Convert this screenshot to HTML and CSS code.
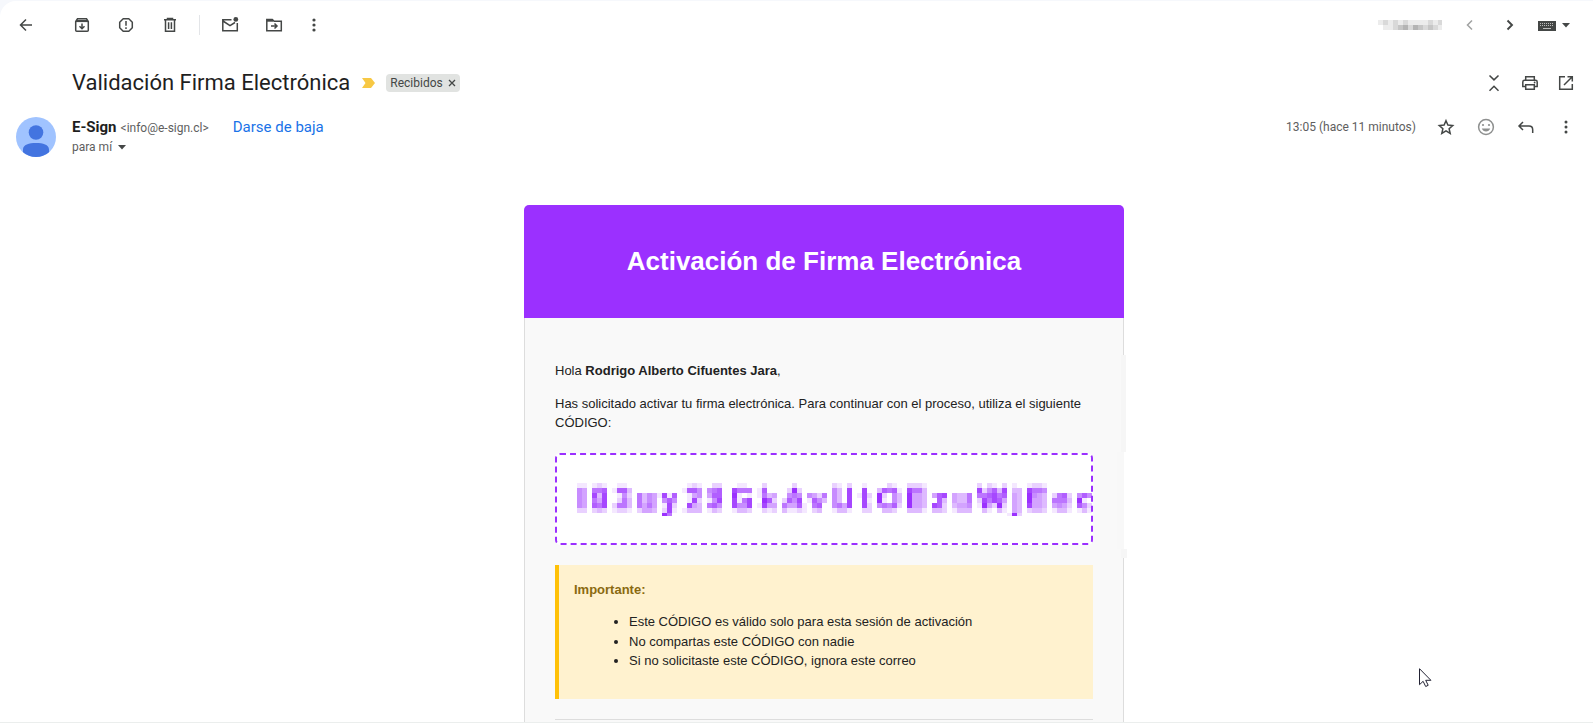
FILE: index.html
```html
<!DOCTYPE html>
<html lang="es">
<head>
<meta charset="utf-8">
<title>Validación Firma Electrónica</title>
<link rel="stylesheet" href="styles.css">
</head>
<body>
<main class="mail">
  <div class="toolbar">
    <button class="icon-btn back" aria-label="Atrás"><svg viewBox="0 0 20 20"><path d="M16 10H5M10 4.5 4.500 10l5.500 5.500"/></svg></button>
    <div class="tools">
      <button class="icon-btn" aria-label="Archivar"><svg viewBox="0 0 20 20"><path d="M3.700 6.500v8.800q0 1 1 1h10.600q1 0 1-1V6.500l-1.800-2.700h-9z"/><path d="M4 6h12" stroke-width="2.200"/><path d="M10 8.500v5M7.500 11.200l2.500 2.500 2.500-2.500"/></svg></button>
      <button class="icon-btn" aria-label="Marcar como spam"><svg viewBox="0 0 20 20"><path d="M7.200 3.700h5.600l3.500 3.500v5.600l-3.500 3.500H7.200l-3.500-3.500V7.200z" stroke-linejoin="round"/><path d="M10 6v4.800M10 12.200v1.700"/></svg></button>
      <button class="icon-btn" aria-label="Eliminar"><svg viewBox="0 0 20 20"><path d="M4 4.800h12M7.500 4V3.500h5V4M5.500 5v11.300h9V5M8.600 7.300v6.700M11.400 7.300v6.700"/></svg></button>
    </div>
    <span class="divider"></span>
    <div class="tools">
      <button class="icon-btn" aria-label="Marcar como no leído"><svg viewBox="0 0 20 20"><path d="M11.500 4.700H2.800v11.100h14.500V8M3 6l7 4.600L15 7.500"/><circle class="solid" cx="15.800" cy="4.400" r="2.400"/></svg></button>
      <button class="icon-btn" aria-label="Mover a"><svg viewBox="0 0 20 20"><path d="M2.800 4.500h5.500l1.800 1.800h7.200v9.500H2.800z"/><path d="M3 5.700h6" stroke-width="2"/><path d="M7 11h5.500M10.500 8.500 13 11l-2.500 2.500"/></svg></button>
    </div>
    <button class="icon-btn more" aria-label="Más"><svg viewBox="0 0 20 20"><g class="solid"><circle cx="10" cy="5" r="1.600"/><circle cx="10" cy="10" r="1.600"/><circle cx="10" cy="15" r="1.600"/></g></svg></button>
    <svg class="counter" viewBox="0 0 64 10" aria-hidden="true"></svg>
    <div class="pager">
      <button class="icon-btn faded" aria-label="Más recientes"><svg viewBox="0 0 20 20"><path d="M12 5.500 7.500 10l4.500 4.500"/></svg></button>
      <button class="icon-btn" aria-label="Anteriores"><svg viewBox="0 0 20 20"><path d="M7.500 5.500 12 10l-4.500 4.500" stroke-width="1.900"/></svg></button>
    </div>
    <button class="keyboard" aria-label="Herramientas de entrada"><svg class="keys" viewBox="0 0 18 12"><path class="solid" d="M0 1h18v10H0z"/><path class="dots" d="M2 3.500h14M2 5.500h14"/><path class="bar" d="M5 8.500h8"/></svg><svg class="caret" viewBox="0 0 8 5"><path class="solid" d="M0 0h8L4 4.500z"/></svg></button>
  </div>

  <header class="subject">
    <h1>Validación Firma Electrónica</h1>
    <svg class="marker" viewBox="0 0 13 10"><path d="M0 0h9l4 5-4 5H0l3.500-5z"/></svg>
    <button class="chip">Recibidos <svg viewBox="0 0 8 8"><path d="m1 1 6 6M7 1 1 7"/></svg></button>
    <div class="actions">
      <button class="icon-btn" aria-label="Contraer todo"><svg viewBox="0 0 20 20"><path d="m5.500 2.500 4.500 4.400 4.500-4.400M5.500 17.700l4.500-4.400 4.500 4.400"/></svg></button>
      <button class="icon-btn" aria-label="Imprimir"><svg viewBox="0 0 20 20"><path d="M5.700 7V3.700h8.600V7M5.500 13.500H2.800V9q0-1.700 1.700-1.700h11q1.700 0 1.700 1.700v4.500h-2.700M5.700 11.700h8.600v4.600H5.700z"/><circle class="solid" cx="14.600" cy="9.500" r=".9"/></svg></button>
      <button class="icon-btn" aria-label="En una ventana nueva"><svg viewBox="0 0 20 20"><path d="M9 3.700H3.700v12.600h12.600V11M11.500 3.700h4.800v4.800M16 4l-8 8"/></svg></button>
    </div>
  </header>

  <section class="sender">
    <svg class="avatar" viewBox="0 0 40 40"><circle cx="20" cy="20" r="20" fill="#a0c3ff"/><circle cx="20" cy="15.500" r="7.300" fill="#4374e0"/><path d="M7 35.200v-2.700C7 27.500 13 26 20 26s13 1.500 13 6.500v2.700A20 20 0 0 1 20 40 20 20 0 0 1 7 35.200z" fill="#4374e0"/></svg>
    <div class="who">
      <div class="from"><b>E-Sign</b><span class="address">&lt;info@e-sign.cl&gt;</span><a href="#">Darse de baja</a></div>
      <button class="to">para mí <svg class="caret" viewBox="0 0 8 5"><path class="solid" d="M0 0h8L4 4.500z"/></svg></button>
    </div>
    <time>13:05 (hace 11 minutos)</time>
    <div class="reply">
      <button class="icon-btn" aria-label="Destacar"><svg viewBox="0 0 20 20"><path d="m10 3.700 1.900 4.400 4.800.4-3.600 3.200 1.100 4.700-4.200-2.500-4.200 2.500 1.100-4.700-3.600-3.200 4.800-.4z"/></svg></button>
      <button class="icon-btn emoji" aria-label="Añadir reacción"><svg viewBox="0 0 20 20"><circle cx="10" cy="10" r="7.400"/><g class="solid"><circle cx="7" cy="8" r="1.100"/><circle cx="13" cy="8" r="1.100"/><path d="M5.800 11.400h8.400Q13 14.400 10 14.400t-4.200-3z"/></g></svg></button>
      <button class="icon-btn" aria-label="Responder"><svg viewBox="0 0 20 20"><path d="M7 5 3 9l4 4M3.300 9H13q3.700 0 3.700 3.700V16"/></svg></button>
      <button class="icon-btn" aria-label="Más opciones"><svg viewBox="0 0 20 20"><g class="solid"><circle cx="10" cy="5" r="1.500"/><circle cx="10" cy="10" r="1.500"/><circle cx="10" cy="15" r="1.500"/></g></svg></button>
    </div>
  </section>

  <div class="viewport">
    <article class="letter">
      <h2>Activación de Firma Electrónica</h2>
      <div class="content">
        <p>Hola <b>Rodrigo Alberto Cifuentes Jara</b>,</p>
        <p>Has solicitado activar tu firma electrónica. Para continuar con el proceso, utiliza el siguiente CÓDIGO:</p>
        <div class="code"><svg class="mosaic" viewBox="0 0 516 33" role="img" aria-label="Código oculto"></svg></div>
        <div class="notice">
          <strong>Importante:</strong>
          <ul>
            <li>Este CÓDIGO es válido solo para esta sesión de activación</li>
            <li>No compartas este CÓDIGO con nadie</li>
            <li>Si no solicitaste este CÓDIGO, ignora este correo</li>
          </ul>
        </div>
        <hr>
      </div>
      <span class="smudge upper"></span>
      <span class="smudge middle"></span>
      <span class="smudge lower"></span>
    </article>
  </div>
</main>
<svg class="pointer" viewBox="0 0 13 20"><path d="M.5.700v16l3.600-3.400 2.600 5.200 2.500-1.200-2.500-5h5.200z"/></svg>
<script src="mosaic.js"></script>
</body>
</html>
```
FILE: mosaic.js
```js
// Each entry is a group of mosaic cells: [first column, rows of levels 0-9 from the top].
const codeBlocks = [
  [0, ["11", "54", "54", "54", "54", "22"]],
  [3, ["121", "667", "838", "648", "768", "232"]],
  [7, ["0110", "1773", "0152", "0263", "2663", "1221"]],
  [12, ["0000", "0000", "6354", "6354", "6464", "2443"]],
  [16, ["0000", "0000", "1817", "0575", "0182", "0281", "0960"]],
  [21, ["0121", "1775", "0145", "0182", "0843", "1333"]],
  [26, ["0220", "5670", "4770", "1580", "6750", "1320"]],
  [30, ["00110", "08666", "09101", "08168", "08558", "01332"]],
  [35, ["00200", "01700", "01634", "00972", "01844", "00212"]],
  [41, ["00200", "02920", "05650", "27580", "64471", "31121"]],
  [46, ["0000", "0000", "5426", "1753", "0670", "0230"]],
  [51, ["2102", "5308", "5308", "5308", "5648", "1331"]],
  [56, ["010", "080", "182", "081", "082", "022"]],
  [60, ["00210", "37671", "92053", "91053", "56572", "03320"]],
  [66, ["2221", "8663", "9443", "9443", "9443", "3331"]],
  [71, ["000", "000", "478", "073", "872", "332"]],
  [75, ["0000", "0000", "4336", "4336", "3445", "1333"]],
  [80, ["202102", "825738", "667867", "286874", "194292", "031031"]],
  [86, ["010", "033", "043", "043", "043", "043", "192"]],
  [90, ["1221", "8665", "9543", "9443", "8443", "2332"]],
  [95, ["0000", "0000", "2672", "6663", "4542", "1331"]],
  [100, ["000", "000", "575", "910", "752", "131"]]
];

const counterBlocks = [
  [0, ["1212121111212", "0112342432321"]]
];

function drawMosaic(svg, blocks, cell, color) {
  for (const [start, rows] of blocks) {
    rows.forEach((row, y) => {
      [...row].forEach((level, x) => {
        if (level === "0") return;
        const rect = document.createElementNS("http://www.w3.org/2000/svg", "rect");
        rect.setAttribute("x", (start + x) * cell);
        rect.setAttribute("y", y * cell);
        rect.setAttribute("width", cell);
        rect.setAttribute("height", y === 6 ? 3 : cell);
        rect.setAttribute("fill", color);
        rect.setAttribute("fill-opacity", level / 9);
        svg.append(rect);
      });
    });
  }
}

drawMosaic(document.querySelector(".mosaic"), codeBlocks, 5, "#9b30ff");
drawMosaic(document.querySelector(".counter"), counterBlocks, 5, "#555");
```
FILE: styles.css
```css
* { box-sizing: border-box; }
body {
  margin: 0;
  height: 100vh;
  overflow: hidden;
  background: #f6f8fc;
  font-family: Roboto, "Liberation Sans", sans-serif;
  color: #1f1f1f;
}
button {
  border: 0;
  padding: 0;
  background: none;
  font: inherit;
  color: inherit;
}
.mail {
  display: flex;
  flex-direction: column;
  height: calc(100vh - 1px);
  margin-top: 1px;
  background: #fff;
  border-top-left-radius: 16px;
  border-bottom: 1px solid #ebeeed;
}

.icon-btn { display: block; width: 20px; height: 20px; flex: none; }
.icon-btn svg {
  display: block;
  fill: none;
  stroke: #444746;
  stroke-width: 1.5;
}
svg .solid { fill: #444746; stroke: none; }
.faded { opacity: .5; }
.caret { width: 8px; height: 5px; }

.toolbar {
  display: flex;
  align-items: center;
  height: 48px;
  padding: 0 23px 0 16px;
}
.back { margin-right: 36px; }
.tools { display: flex; gap: 24px; }
.divider { width: 1px; height: 20px; margin: 0 20px 0 19px; background: #e3e5e8; }
.more { margin-left: 20px; }
.counter { width: 64px; height: 10px; margin-left: auto; }
.pager { display: flex; gap: 20px; margin: 0 18px; }
.keyboard { display: flex; align-items: center; gap: 6px; }
.keys { width: 18px; height: 12px; margin-top: 2px; }
.keys path { fill: none; stroke: #bbb; }
.keys .solid { fill: #444746; stroke: none; }
.keys .dots { stroke-dasharray: 1 1; }

.subject {
  display: flex;
  align-items: center;
  height: 32px;
  margin-top: 18px;
  padding: 0 17px 0 72px;
}
.subject h1 { margin: 0; font-size: 22px; line-height: 28px; font-weight: 400; }
.marker { width: 13px; height: 10px; margin: 0 11px 0 12px; fill: #f7c844; }
.chip {
  display: flex;
  align-items: center;
  gap: 5px;
  height: 18px;
  padding: 0 4px;
  border-radius: 4px;
  background: #e1e3e1;
  font-size: 12px;
  color: #444746;
}
.chip svg { width: 8px; height: 8px; stroke: #444746; stroke-width: 1.3; }
.actions { display: flex; gap: 16px; margin-left: auto; }

.sender {
  display: flex;
  align-items: flex-start;
  margin-top: 18px;
  padding: 0 17px 0 16px;
}
.avatar { width: 40px; height: 40px; margin-right: 16px; }
.from { display: flex; align-items: baseline; height: 20px; font-size: 15px; line-height: 20px; }
.from b { font-weight: 700; }
.address { margin: 0 24px 0 4px; font-size: 12px; color: #5e5e5e; }
.from a { color: #1a73e8; font-weight: 400; text-decoration: none; }
.to { display: flex; align-items: center; gap: 6px; height: 20px; font-size: 12px; color: #5e5e5e; }
.sender time { margin-left: auto; font-size: 12px; line-height: 20px; color: #5e5e5e; }
.reply { display: flex; gap: 20px; margin-left: 20px; }
.emoji { opacity: .6; }

.viewport { flex: 1; min-height: 0; margin-top: 48px; padding-left: 55px; overflow: hidden; }
.letter {
  position: relative;
  max-width: 600px;
  margin: 0 auto;
  font-family: "Liberation Sans", Arial, sans-serif;
  font-size: 13px;
  line-height: 1.5;
  color: #222;
}
.letter h2 {
  margin: 0;
  padding: 37px 20px;
  border-radius: 5px 5px 0 0;
  background: #9b30ff;
  color: #fff;
  font-size: 26px;
  line-height: 39px;
  text-align: center;
}
.content { padding: 30px; border: 1px solid #ddd; border-top: 0; background: #f9f9f9; }
.content p { margin: 13px 0; }
.code {
  height: 92px;
  margin: 20px 0;
  padding: 28px 0 0 20px;
  border: 2px dashed #9b30ff;
  border-radius: 5px;
  background: #fff;
}
.mosaic { display: block; width: 516px; height: 33px; shape-rendering: crispEdges; }
.notice { margin: 20px 0; padding: 15px; border-left: 4px solid #ffc107; background: #fff2cf; }
.notice strong { color: #8a6a10; }
.notice ul { margin: 13px 0; padding-left: 55px; }
.content hr { margin: 20px 0; border: 0; border-top: 1px solid #ddd; }

/* Blurred strips that lie over the right edge of the letter */
.smudge { position: absolute; background: #f6f6f6; }
.upper { top: 150px; right: -2px; width: 5px; height: 97px; }
.middle { top: 247px; right: 0; width: 7px; height: 97px; background: #f8f8f8; }
.lower { top: 344px; right: -3px; width: 6px; height: 9px; }

.pointer {
  position: absolute;
  left: 1419px;
  top: 668px;
  width: 13px;
  height: 20px;
  fill: #fff;
  stroke: #223;
}
```
